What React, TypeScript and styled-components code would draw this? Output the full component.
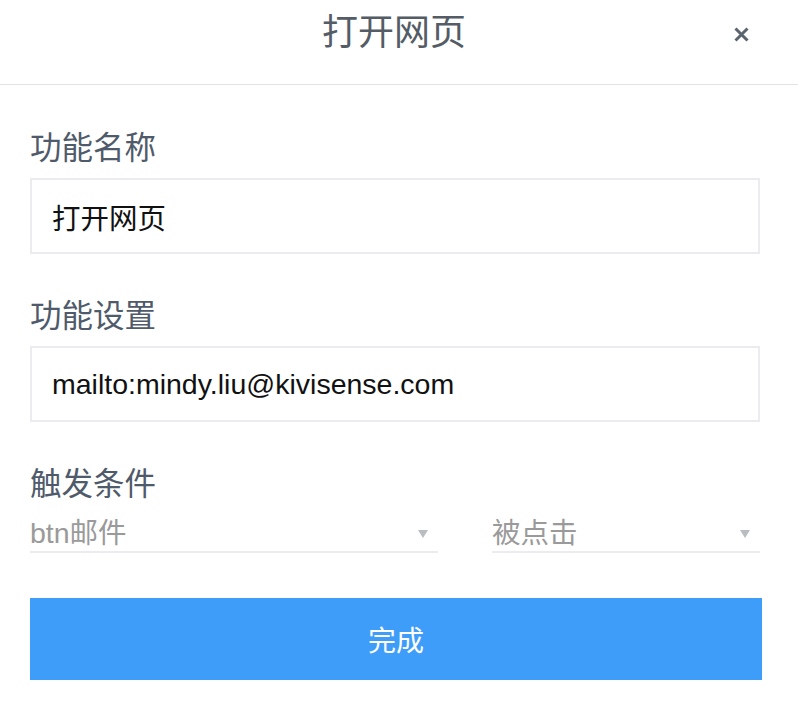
import React from "react";
import styled, { createGlobalStyle } from "styled-components";

const Global = createGlobalStyle`
  html, body { margin: 0; padding: 0; background: #ffffff; }
  body { font-family: "Liberation Sans", "Noto Sans CJK SC", sans-serif; }
  * { box-sizing: border-box; }
`;

const Page = styled.div`
  width: 798px;
  min-height: 706px;
  background: #fff;
`;

const Header = styled.header`
  position: relative;
  height: 85px;
  border-bottom: 1px solid #e3e3e3;
  display: flex;
  justify-content: center;
  align-items: flex-start;
  padding: 5px 10px 0 0;
`;

const Title = styled.h1`
  margin: 0;
  font-family: "Noto Sans CJK SC", sans-serif;
  font-weight: 400;
  font-size: 36px;
  line-height: 48px;
  color: #545c66;
`;

const CloseButton = styled.button`
  position: absolute;
  right: 49px;
  top: 26px;
  width: 16px;
  height: 16px;
  padding: 0;
  border: none;
  background: transparent;
  display: flex;
  align-items: center;
  justify-content: center;
`;

const Body = styled.div`
  padding: 40px 36px 0 30px;
  display: flex;
  flex-direction: column;
`;

const Label = styled.div<{ $top?: number }>`
  font-family: "Noto Sans CJK SC", sans-serif;
  font-size: 31.5px;
  line-height: 40px;
  color: #4f5a6a;
  margin-top: ${(p) => p.$top ?? 0}px;
`;

const TextBox = styled.div`
  margin-top: 13px;
  width: 730px;
  height: 76px;
  border: 2px solid #ebebf0;
  display: flex;
  align-items: center;
  padding-left: 20px;
  font-family: "Liberation Sans", "Noto Sans CJK SC", sans-serif;
  font-size: 28.5px;
  color: #111;
`;

const SelectRow = styled.div`
  margin-top: 9px;
  display: flex;
  justify-content: space-between;
  width: 730px;
`;

const Select = styled.div<{ $w: number }>`
  width: ${(p) => p.$w}px;
  height: 43px;
  border-bottom: 2px solid #ebebf0;
  display: flex;
  align-items: center;
  justify-content: space-between;
  font-family: "Liberation Sans", "Noto Sans CJK SC", sans-serif;
  font-size: 28.5px;
  color: #9a9a9a;
  padding-right: 10px;
`;

const Caret = styled.span`
  width: 0;
  height: 0;
  border-left: 5.5px solid transparent;
  border-right: 5.5px solid transparent;
  border-top: 8px solid #b9bcc1;
  margin-top: 6px;
`;

const Done = styled.button`
  margin-top: 45px;
  width: 732px;
  height: 82px;
  border: none;
  background: #3d9df9;
  color: #fff;
  font-family: "Noto Sans CJK SC", sans-serif;
  font-size: 28px;
  padding: 0;
`;

export default function App() {
  return (
    <Page>
      <Global />
      <Header>
        <Title>打开网页</Title>
        <CloseButton aria-label="关闭">
          <svg width="15" height="15" viewBox="0 0 15 15">
            <path d="M1.5 1.5 L13.5 13.5 M13.5 1.5 L1.5 13.5" stroke="#5b6570" strokeWidth="3" strokeLinecap="butt" />
          </svg>
        </CloseButton>
      </Header>
      <Body>
        <Label>功能名称</Label>
        <TextBox>打开网页</TextBox>
        <Label $top={39}>功能设置</Label>
        <TextBox>mailto:mindy.liu@kivisense.com</TextBox>
        <Label $top={39}>触发条件</Label>
        <SelectRow>
          <Select $w={408}>
            <span>btn邮件</span>
            <Caret />
          </Select>
          <Select $w={268}>
            <span>被点击</span>
            <Caret />
          </Select>
        </SelectRow>
        <Done>完成</Done>
      </Body>
    </Page>
  );
}
